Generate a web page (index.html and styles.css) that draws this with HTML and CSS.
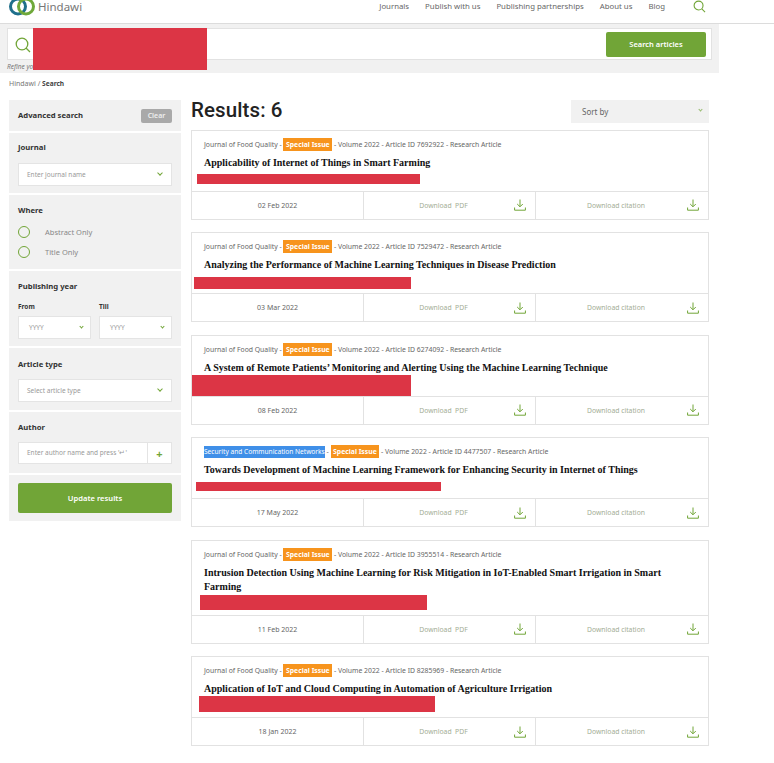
FILE: index.html
```html
<!DOCTYPE html>
<html lang="en">
<head>
    <meta charset="UTF-8">
    <title>Hindawi - Search</title>
    <link rel="stylesheet" href="styles.css">
</head>
<body>
    <header class="header">
        <a class="logo">
            <svg class="logo-mark" viewBox="0 0 26 17" width="26" height="17">
                <circle cx="9" cy="6.5" r="7.5" fill="none" stroke="#1f6f8b" stroke-width="3"/>
                <circle cx="17" cy="6.5" r="7.5" fill="none" stroke="#6fa83a" stroke-width="3"/>
            </svg>
            <span class="logo-text">Hindawi</span>
        </a>
        <nav class="nav">
            <a>Journals</a>
            <a>Publish with us</a>
            <a>Publishing partnerships</a>
            <a>About us</a>
            <a>Blog</a>
            <svg class="nav-search" viewBox="0 0 14 14" width="13" height="13">
                <circle cx="6" cy="6" r="4.8" fill="none" stroke="#71a537" stroke-width="1.2"/>
                <path d="M9.5 9.5L13 13" stroke="#71a537" stroke-width="1.2"/>
            </svg>
        </nav>
    </header>

    <section class="search-band">
        <div class="search-box">
            <svg class="search-icon" viewBox="0 0 16 16" width="16" height="16">
                <circle cx="7" cy="7" r="5.8" fill="none" stroke="#71a537" stroke-width="1.3"/>
                <path d="M11 11L15 15" stroke="#71a537" stroke-width="1.3"/>
            </svg>
            <button class="search-btn">Search articles</button>
        </div>
        <p class="refine">Refine your search</p>
        <div class="redact redact-search"></div>
    </section>

    <div class="breadcrumb">Hindawi / <b>Search</b></div>

    <div class="layout">
        <aside class="sidebar">
            <div class="panel panel-top">
                <h3>Advanced search</h3>
                <button class="clear-btn">Clear</button>
            </div>
            <div class="panel panel-journal">
                <h3>Journal</h3>
                <div class="select">Enter journal name<i class="chevron"></i></div>
            </div>
            <div class="panel panel-where">
                <h3>Where</h3>
                <label class="radio"><span class="radio-dot"></span>Abstract Only</label>
                <label class="radio"><span class="radio-dot"></span>Title Only</label>
            </div>
            <div class="panel panel-year">
                <h3>Publishing year</h3>
                <div class="year-row">
                    <div class="year-col">
                        <h4>From</h4>
                        <div class="select select-year">YYYY<i class="chevron chevron-year"></i></div>
                    </div>
                    <div class="year-col">
                        <h4>Till</h4>
                        <div class="select select-year">YYYY<i class="chevron chevron-year"></i></div>
                    </div>
                </div>
            </div>
            <div class="panel panel-type">
                <h3>Article type</h3>
                <div class="select">Select article type<i class="chevron"></i></div>
            </div>
            <div class="panel panel-author">
                <h3>Author</h3>
                <div class="select select-author">
                    <span class="author-input">Enter author name and press '↵'</span>
                    <span class="author-add">+</span>
                </div>
            </div>
            <div class="panel panel-submit">
                <button class="update-btn">Update results</button>
            </div>
        </aside>

        <main class="results">
            <div class="results-head">
                <h1>Results: 6</h1>
                <div class="sort">Sort by<i class="chevron chevron-small"></i></div>
            </div>

            <article class="card">
                <div class="card-body">
                    <p class="meta">Journal of Food Quality - <span class="tag">Special Issue</span> - Volume 2022 - Article ID 7692922 - Research Article</p>
                    <h2>Applicability of Internet of Things in Smart Farming</h2>
                    <div class="authors"></div>
                </div>
                <div class="card-foot">
                    <div class="cell">02 Feb 2022</div>
                    <div class="cell cell-link"><span>Download &nbsp;PDF</span><svg class="dl" viewBox="0 0 12 12" width="12" height="12"><path d="M6 0.5V7.5M3.2 5L6 7.8L8.8 5M0.6 8.5V11.2H11.4V8.5" fill="none" stroke="#71a537" stroke-width="1"/></svg></div>
                    <div class="cell cell-link"><span>Download citation</span><svg class="dl" viewBox="0 0 12 12" width="12" height="12"><path d="M6 0.5V7.5M3.2 5L6 7.8L8.8 5M0.6 8.5V11.2H11.4V8.5" fill="none" stroke="#71a537" stroke-width="1"/></svg></div>
                </div>
                <div class="redact redact-1"></div>
            </article>

            <article class="card">
                <div class="card-body">
                    <p class="meta">Journal of Food Quality - <span class="tag">Special Issue</span> - Volume 2022 - Article ID 7529472 - Research Article</p>
                    <h2>Analyzing the Performance of Machine Learning Techniques in Disease Prediction</h2>
                    <div class="authors"></div>
                </div>
                <div class="card-foot">
                    <div class="cell">03 Mar 2022</div>
                    <div class="cell cell-link"><span>Download &nbsp;PDF</span><svg class="dl" viewBox="0 0 12 12" width="12" height="12"><path d="M6 0.5V7.5M3.2 5L6 7.8L8.8 5M0.6 8.5V11.2H11.4V8.5" fill="none" stroke="#71a537" stroke-width="1"/></svg></div>
                    <div class="cell cell-link"><span>Download citation</span><svg class="dl" viewBox="0 0 12 12" width="12" height="12"><path d="M6 0.5V7.5M3.2 5L6 7.8L8.8 5M0.6 8.5V11.2H11.4V8.5" fill="none" stroke="#71a537" stroke-width="1"/></svg></div>
                </div>
                <div class="redact redact-2"></div>
            </article>

            <article class="card">
                <div class="card-body">
                    <p class="meta">Journal of Food Quality - <span class="tag">Special Issue</span> - Volume 2022 - Article ID 6274092 - Research Article</p>
                    <h2>A System of Remote Patients’ Monitoring and Alerting Using the Machine Learning Technique</h2>
                    <div class="authors"></div>
                </div>
                <div class="card-foot">
                    <div class="cell">08 Feb 2022</div>
                    <div class="cell cell-link"><span>Download &nbsp;PDF</span><svg class="dl" viewBox="0 0 12 12" width="12" height="12"><path d="M6 0.5V7.5M3.2 5L6 7.8L8.8 5M0.6 8.5V11.2H11.4V8.5" fill="none" stroke="#71a537" stroke-width="1"/></svg></div>
                    <div class="cell cell-link"><span>Download citation</span><svg class="dl" viewBox="0 0 12 12" width="12" height="12"><path d="M6 0.5V7.5M3.2 5L6 7.8L8.8 5M0.6 8.5V11.2H11.4V8.5" fill="none" stroke="#71a537" stroke-width="1"/></svg></div>
                </div>
                <div class="redact redact-3"></div>
            </article>

            <article class="card">
                <div class="card-body">
                    <p class="meta"><span class="journal-hl">Security and Communication Networks</span> - <span class="tag">Special Issue</span> - Volume 2022 - Article ID 4477507 - Research Article</p>
                    <h2>Towards Development of Machine Learning Framework for Enhancing Security in Internet of Things</h2>
                    <div class="authors"></div>
                </div>
                <div class="card-foot">
                    <div class="cell">17 May 2022</div>
                    <div class="cell cell-link"><span>Download &nbsp;PDF</span><svg class="dl" viewBox="0 0 12 12" width="12" height="12"><path d="M6 0.5V7.5M3.2 5L6 7.8L8.8 5M0.6 8.5V11.2H11.4V8.5" fill="none" stroke="#71a537" stroke-width="1"/></svg></div>
                    <div class="cell cell-link"><span>Download citation</span><svg class="dl" viewBox="0 0 12 12" width="12" height="12"><path d="M6 0.5V7.5M3.2 5L6 7.8L8.8 5M0.6 8.5V11.2H11.4V8.5" fill="none" stroke="#71a537" stroke-width="1"/></svg></div>
                </div>
                <div class="redact redact-4"></div>
            </article>

            <article class="card">
                <div class="card-body">
                    <p class="meta">Journal of Food Quality - <span class="tag">Special Issue</span> - Volume 2022 - Article ID 3955514 - Research Article</p>
                    <h2>Intrusion Detection Using Machine Learning for Risk Mitigation in IoT-Enabled Smart Irrigation in Smart Farming</h2>
                    <div class="authors"></div>
                </div>
                <div class="card-foot">
                    <div class="cell">11 Feb 2022</div>
                    <div class="cell cell-link"><span>Download &nbsp;PDF</span><svg class="dl" viewBox="0 0 12 12" width="12" height="12"><path d="M6 0.5V7.5M3.2 5L6 7.8L8.8 5M0.6 8.5V11.2H11.4V8.5" fill="none" stroke="#71a537" stroke-width="1"/></svg></div>
                    <div class="cell cell-link"><span>Download citation</span><svg class="dl" viewBox="0 0 12 12" width="12" height="12"><path d="M6 0.5V7.5M3.2 5L6 7.8L8.8 5M0.6 8.5V11.2H11.4V8.5" fill="none" stroke="#71a537" stroke-width="1"/></svg></div>
                </div>
                <div class="redact redact-5"></div>
            </article>

            <article class="card">
                <div class="card-body">
                    <p class="meta">Journal of Food Quality - <span class="tag">Special Issue</span> - Volume 2022 - Article ID 8285969 - Research Article</p>
                    <h2>Application of IoT and Cloud Computing in Automation of Agriculture Irrigation</h2>
                    <div class="authors"></div>
                </div>
                <div class="card-foot">
                    <div class="cell">18 Jan 2022</div>
                    <div class="cell cell-link"><span>Download &nbsp;PDF</span><svg class="dl" viewBox="0 0 12 12" width="12" height="12"><path d="M6 0.5V7.5M3.2 5L6 7.8L8.8 5M0.6 8.5V11.2H11.4V8.5" fill="none" stroke="#71a537" stroke-width="1"/></svg></div>
                    <div class="cell cell-link"><span>Download citation</span><svg class="dl" viewBox="0 0 12 12" width="12" height="12"><path d="M6 0.5V7.5M3.2 5L6 7.8L8.8 5M0.6 8.5V11.2H11.4V8.5" fill="none" stroke="#71a537" stroke-width="1"/></svg></div>
                </div>
                <div class="redact redact-6"></div>
            </article>
        </main>
    </div>
</body>
</html>
```

FILE: styles.css
```css
* {
    margin: 0;
    padding: 0;
    box-sizing: border-box;
}

body {
    font-family: "Noto Sans", "Open Sans", sans-serif;
    background: white;
    color: #555;
    overflow: hidden;
}

/* header */
.header {
    height: 24px;
    display: flex;
    align-items: flex-start;
    justify-content: space-between;
    border-bottom: 1px solid #dcdcdc;
    padding: 0 68px 0 9px;
}

.logo {
    display: flex;
    align-items: flex-start;
}

.logo-mark {
    display: block;
}

.logo-text {
    font-size: 11.5px;
    line-height: 16px;
    color: #777;
    margin-left: 3px;
    padding-top: 0;
    margin-top: -1px;
}

.nav {
    display: flex;
    align-items: flex-start;
    gap: 16px;
    font-size: 7.8px;
    line-height: 12px;
    color: #666;
}

.nav-search {
    margin-left: 12px;
}

/* search */
.search-band {
    position: relative;
    width: 719px;
    height: 49px;
    background: #f1f1f1;
    padding: 4px 7px 0;
}

.search-box {
    height: 32px;
    background: white;
    border: 1px solid #e2e2e2;
    display: flex;
    align-items: center;
    justify-content: space-between;
    padding: 0 5px 0 7px;
}

.search-icon {
    margin-top: 2px;
}

.search-btn {
    width: 100px;
    height: 25px;
    background: #71a537;
    color: white;
    border: none;
    border-radius: 2px;
    font-family: inherit;
    font-size: 7.5px;
    font-weight: 600;
}

.refine {
    font-size: 6.5px;
    font-style: italic;
    color: #777;
    margin-top: 2px;
}

.redact {
    position: absolute;
    background: #dc3545;
}

.redact-search {
    left: 33px;
    top: 4px;
    width: 174px;
    height: 42px;
}

.breadcrumb {
    height: 27px;
    padding: 6px 0 0 9px;
    font-size: 7px;
    line-height: 10px;
    color: #777;
}

.breadcrumb b {
    color: #444;
    font-size: 6.6px;
}

/* sidebar */
.layout {
    display: flex;
    gap: 10px;
    padding-left: 9px;
}

.sidebar {
    width: 172px;
    display: flex;
    flex-direction: column;
    gap: 2px;
    align-self: flex-start;
}

.panel {
    background: #f1f1f1;
    padding: 10px 9px 0;
}

.panel h3 {
    font-size: 7.7px;
    line-height: 11px;
    font-weight: 700;
    color: #333;
}

.panel h4 {
    font-size: 6.5px;
    line-height: 9px;
    font-weight: 700;
    color: #333;
}

.panel-top {
    height: 31px;
    display: flex;
    align-items: center;
    justify-content: space-between;
    padding-top: 0;
}

.clear-btn {
    width: 31px;
    height: 14px;
    background: #a9a9a9;
    color: #eee;
    border: none;
    border-radius: 2px;
    font-family: inherit;
    font-size: 7px;
    font-weight: 600;
}

.panel-journal {
    height: 60px;
    padding-top: 9px;
}

.panel-journal .select {
    margin-top: 10px;
}

.panel-where {
    height: 74px;
}

.panel-year {
    height: 75px;
}

.panel-type {
    height: 62px;
    padding-top: 11px;
}

.panel-type .select {
    margin-top: 9px;
}

.panel-author {
    height: 61px;
}

.panel-submit {
    height: 46px;
    padding-top: 8px;
}

.select {
    position: relative;
    height: 23px;
    margin-top: 11px;
    background: white;
    border: 1px solid #e4e4e4;
    display: flex;
    align-items: center;
    padding-left: 8px;
    font-size: 6.5px;
    color: #999;
}

.chevron {
    position: absolute;
    right: 9px;
    top: 7px;
    width: 4px;
    height: 4px;
    border-right: 1px solid #71a537;
    border-bottom: 1px solid #71a537;
    transform: rotate(45deg);
}

.chevron-year {
    right: 7px;
    top: 8px;
    width: 3px;
    height: 3px;
}

.chevron-small {
    right: 7px;
    top: 8px;
    width: 3px;
    height: 3px;
    opacity: 0.7;
}

.radio {
    display: flex;
    align-items: center;
    height: 20px;
    font-size: 7.5px;
    color: #888;
}

.panel-where h3 {
    margin-bottom: 6px;
}

.radio-dot {
    width: 12px;
    height: 12px;
    border: 1px solid #71a537;
    border-radius: 50%;
    margin-right: 15px;
}

.year-row {
    display: flex;
    gap: 8px;
    margin-top: 10px;
}

.year-col {
    flex: 1;
}

.select-year {
    margin-top: 5px;
    padding-left: 10px;
}

.select-author {
    height: 22px;
    margin-top: 9px;
    padding: 0;
}

.author-input {
    flex: 1;
    padding-left: 8px;
    line-height: 20px;
    border-right: 1px solid #e4e4e4;
}

.author-add {
    width: 23px;
    text-align: center;
    color: #71a537;
    font-size: 11px;
    font-weight: 700;
}

.update-btn {
    width: 100%;
    height: 30px;
    background: #71a537;
    color: white;
    border: none;
    border-radius: 2px;
    font-family: inherit;
    font-size: 7.6px;
    font-weight: 600;
}

/* results */
.results {
    width: 518px;
}

.results-head {
    height: 29.9px;
    display: flex;
    justify-content: space-between;
    align-items: flex-start;
}

.results-head h1 {
    font-family: Roboto, sans-serif;
    font-size: 20.5px;
    line-height: 21px;
    font-weight: 500;
    color: #222;
    letter-spacing: 0.1px;
}

.sort {
    position: relative;
    width: 138px;
    height: 23px;
    background: #f1f1f1;
    font-size: 8px;
    line-height: 24px;
    padding-left: 11px;
    color: #666;
}

.card {
    position: relative;
    border: 1px solid #e2e2e2;
    margin-bottom: 12.5px;
}

.card-body {
    padding: 8px 24px 9px 12px;
}

.meta {
    font-size: 6.85px;
    line-height: 12px;
    color: #666;
    white-space: nowrap;
}

.tag {
    display: inline-block;
    line-height: 13px;
    margin: -1px 0;
    background: #f7941d;
    color: white;
    font-weight: 700;
    padding: 0 2.5px;
}

.journal-hl {
    display: inline-block;
    font-size: 6.6px;
    line-height: 12px;
    background: #3f8fe8;
    color: white;
}

.card h2 {
    font-family: "Liberation Serif", serif;
    font-size: 10px;
    line-height: 14px;
    font-weight: 700;
    color: #111;
    margin-top: 5px;
}

.authors {
    height: 12px;
}

.card-foot {
    display: grid;
    grid-template-columns: 171px 172px 1fr;
    height: 28px;
    border-top: 1px solid #e2e2e2;
}

.cell {
    display: flex;
    align-items: center;
    justify-content: center;
    font-size: 7px;
    color: #666;
    border-left: 1px solid #e2e2e2;
    padding: 0 9px;
}

.cell:first-child {
    border-left: none;
}

.cell-link {
    font-size: 6.8px;
    color: #a3ad95;
}

.cell-link span {
    flex: 1;
    text-align: center;
}

.dl {
    flex: none;
}

.redact-1 {
    left: 5px;
    top: 43px;
    width: 223px;
    height: 10px;
}

.redact-2 {
    left: 2px;
    top: 44px;
    width: 217px;
    height: 12px;
}

.redact-3 {
    left: 0;
    top: 39px;
    width: 219px;
    height: 21px;
}

.redact-4 {
    left: 4px;
    top: 44px;
    width: 245px;
    height: 9px;
}

.redact-5 {
    left: 8px;
    top: 54px;
    width: 227px;
    height: 15px;
}

.redact-6 {
    left: 7px;
    top: 39px;
    width: 236px;
    height: 16px;
}
```
